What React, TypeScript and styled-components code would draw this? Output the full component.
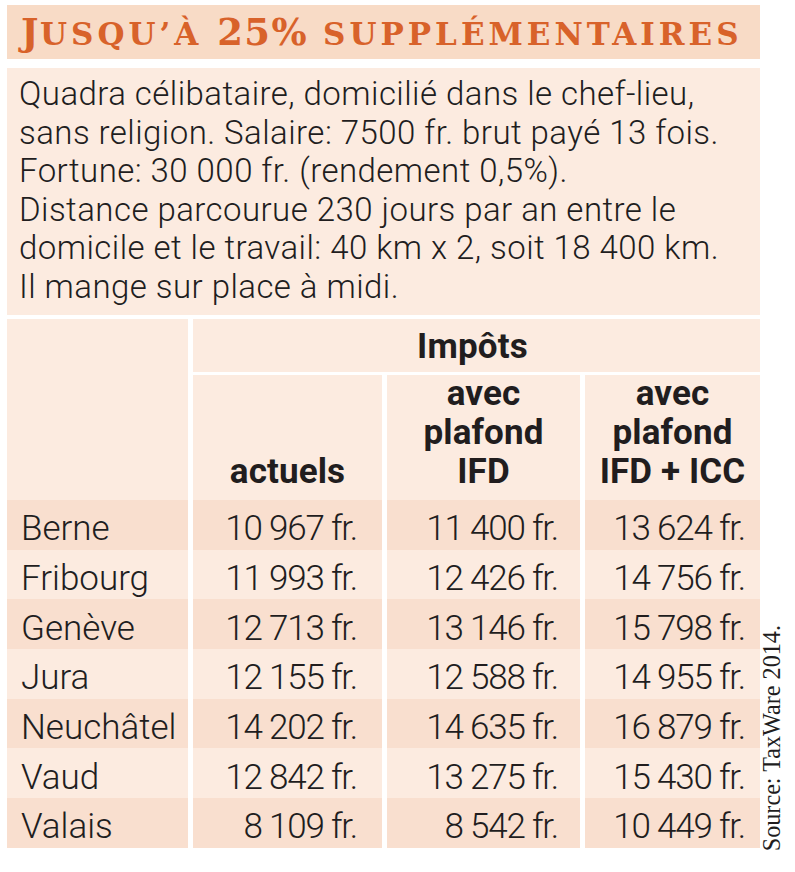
import React from "react";
import styled, { createGlobalStyle } from "styled-components";

const Global = createGlobalStyle`
  html, body { margin: 0; padding: 0; background: #ffffff; }
  body { width: 795px; height: 872px; overflow: hidden; }
`;

const C = {
  band: "#f8dbc6",
  light: "#fcebe0",
  dark: "#f9dfcf",
  orange: "#d8622a",
  ink: "#211d1e",
};

const Page = styled.div`
  padding: 5px 0 0 7px;
  width: 788px;
  font-family: Roboto, "Liberation Sans", sans-serif;
  color: ${C.ink};
`;

const TitleBand = styled.h1`
  margin: 0;
  width: 753px;
  height: 54px;
  box-sizing: border-box;
  background: ${C.band};
  padding: 0 0 0 14px;
  display: flex;
  align-items: baseline;
  font-family: "DejaVu Serif", "Liberation Serif", serif;
  font-weight: 700;
  color: ${C.orange};
  font-size: 31px;
  line-height: 54px;
  letter-spacing: 4px;
  white-space: pre;
`;

const BigCap = styled.span`
  font-size: 37px;
  letter-spacing: 1.5px;
`;

const Description = styled.p`
  margin: 9px 0 0 0;
  width: 753px;
  height: 247px;
  box-sizing: border-box;
  background: ${C.light};
  padding: 7px 0 0 12px;
  font-size: 33px;
  font-weight: 300;
  line-height: 38.6px;
  letter-spacing: 0.45px;
`;

const Body = styled.div`
  display: flex;
  align-items: flex-end;
  margin-top: 4px;
`;

const Table = styled.div`
  display: grid;
  grid-template-columns: 181px 189px 193px 175px;
  grid-template-rows: 56px 125px repeat(7, 49.7px);
  column-gap: 5px;
  width: 753px;
`;

const Corner = styled.div`
  grid-row: span 2;
  background: ${C.light};
`;

const GroupHead = styled.div`
  grid-column: span 3;
  background: ${C.light};
  border-bottom: 3px solid #ffffff;
  display: flex;
  align-items: center;
  justify-content: center;
  font-weight: 700;
  font-size: 35px;
  letter-spacing: 0.2px;
  padding: 2px 8px 0 0;
`;

const ColHead = styled.div`
  background: ${C.light};
  display: flex;
  align-items: flex-end;
  justify-content: center;
  text-align: center;
  font-weight: 700;
  font-size: 35px;
  line-height: 39px;
  padding-bottom: 9px;
  letter-spacing: 0.1px;
`;

const Cell = styled.div<{ $dark: boolean; $pad?: number; $label?: boolean }>`
  background: ${(p) => (p.$dark ? C.dark : C.light)};
  display: flex;
  align-items: center;
  justify-content: ${(p) => (p.$label ? "flex-start" : "flex-end")};
  padding: 8px ${(p) => p.$pad ?? 0}px 0 ${(p) => (p.$label ? 14 : 0)}px;
  font-size: 35px;
  font-weight: 300;
  letter-spacing: ${(p) => (p.$label ? "0px" : "-1.2px")};
  white-space: nowrap;
`;

const SourceCol = styled.div`
  width: 24px;
  display: flex;
  justify-content: center;
`;

const Source = styled.span`
  writing-mode: vertical-rl;
  transform: rotate(180deg);
  margin-bottom: -3px;
  font-family: "Liberation Serif", "DejaVu Serif", serif;
  font-size: 24.2px;
  line-height: 24px;
  color: ${C.ink};
`;

const rows: [string, string, string, string][] = [
  ["Berne", "10 967 fr.", "11 400 fr.", "13 624 fr."],
  ["Fribourg", "11 993 fr.", "12 426 fr.", "14 756 fr."],
  ["Genève", "12 713 fr.", "13 146 fr.", "15 798 fr."],
  ["Jura", "12 155 fr.", "12 588 fr.", "14 955 fr."],
  ["Neuchâtel", "14 202 fr.", "14 635 fr.", "16 879 fr."],
  ["Vaud", "12 842 fr.", "13 275 fr.", "15 430 fr."],
  ["Valais", "8 109 fr.", "8 542 fr.", "10 449 fr."],
];

const pads = [25, 22, 15];

export default function App() {
  return (
    <>
      <Global />
      <Page>
        <TitleBand>
          <BigCap>J</BigCap>USQU’À <BigCap>25%</BigCap> SUPPLÉMENTAIRES
        </TitleBand>
        <Description>
          Quadra célibataire, domicilié dans le chef-lieu,
          <br />
          sans religion. Salaire: 7500 fr. brut payé 13 fois.
          <br />
          Fortune: 30 000 fr. (rendement 0,5%).
          <br />
          Distance parcourue 230 jours par an entre le
          <br />
          domicile et le travail: 40 km x 2, soit 18 400 km.
          <br />
          Il mange sur place à midi.
        </Description>
        <Body>
          <Table>
            <Corner />
            <GroupHead>Impôts</GroupHead>
            <ColHead>actuels</ColHead>
            <ColHead>
              avec
              <br />
              plafond
              <br />
              IFD
            </ColHead>
            <ColHead>
              avec
              <br />
              plafond
              <br />
              IFD + ICC
            </ColHead>
            {rows.map((r, i) => (
              <React.Fragment key={r[0]}>
                <Cell $dark={i % 2 === 0} $label>
                  {r[0]}
                </Cell>
                {r.slice(1).map((v, j) => (
                  <Cell key={j} $dark={i % 2 === 0} $pad={pads[j]}>
                    {v}
                  </Cell>
                ))}
              </React.Fragment>
            ))}
          </Table>
          <SourceCol>
            <Source>Source: TaxWare 2014.</Source>
          </SourceCol>
        </Body>
      </Page>
    </>
  );
}
